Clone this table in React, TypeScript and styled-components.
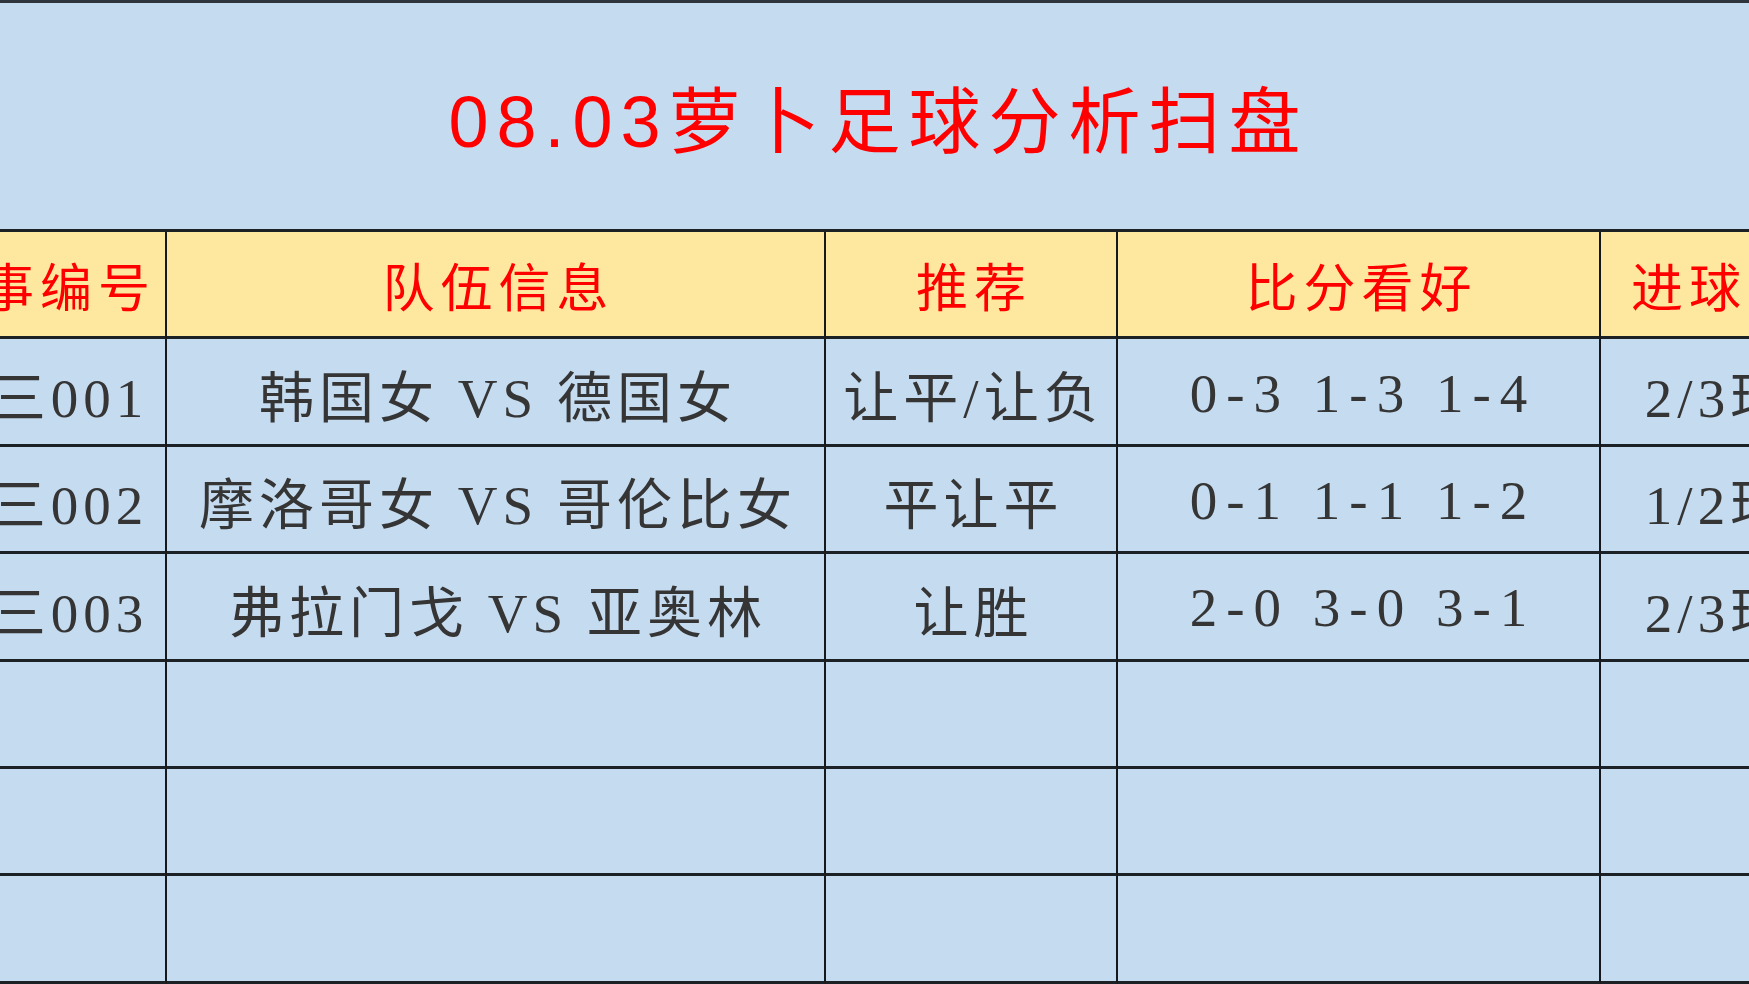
import styled, { createGlobalStyle } from 'styled-components'

// match sheet columns: the first and last are cut by the frame edge
const columns = [258, 659, 292, 483, 230]

const headers = ['赛事编号', '队伍信息', '推荐', '比分看好', '进球数']

interface Match {
    code: string
    teams: string
    tip: string
    scores: string
    goals: string
}

const matches: Match[] = [
    { code: '周三001', teams: '韩国女 VS 德国女', tip: '让平/让负', scores: '0-3 1-3 1-4', goals: '2/3球' },
    { code: '周三002', teams: '摩洛哥女 VS 哥伦比女', tip: '平让平', scores: '0-1 1-1 1-2', goals: '1/2球' },
    { code: '周三003', teams: '弗拉门戈 VS 亚奥林', tip: '让胜', scores: '2-0 3-0 3-1', goals: '2/3球' },
]

const emptyRows = 3

const GlobalStyle = createGlobalStyle`
    * {
        box-sizing: border-box;
    }
    body {
        margin: 0;
        background: #c5dbf0;
        font-family: "Liberation Serif", "Noto Sans CJK SC", serif;
    }
`

const App = () => {
    return (
        <>
            <GlobalStyle />
            <Page>
                <Title>08.03萝卜足球分析扫盘</Title>
                <Viewport>
                    <Grid>
                        {headers.map((h) => (
                            <HeadCell key={h}>{h}</HeadCell>
                        ))}
                        {matches.map((m) => (
                            <Row key={m.code}>
                                <Cell>{m.code}</Cell>
                                <Cell>{m.teams}</Cell>
                                <Cell>{m.tip}</Cell>
                                <Cell $spacing={9}>{m.scores}</Cell>
                                <Cell>{m.goals}</Cell>
                            </Row>
                        ))}
                        {Array.from({ length: emptyRows }).map((_, i) => (
                            <Row key={'empty' + i}>
                                {columns.map((_, j) => (
                                    <Cell key={j} />
                                ))}
                            </Row>
                        ))}
                    </Grid>
                </Viewport>
            </Page>
        </>
    )
}

const Page = styled.div`
    width: 1749px;
    height: 984px;
    overflow: hidden;
    background: #c5dbf0;
    border-top: 3px solid #2e353c;
    display: flex;
    flex-direction: column;
`

const Title = styled.h1`
    margin: 0;
    height: 226px;
    display: flex;
    align-items: center;
    justify-content: center;
    padding-bottom: 2px;
    color: #ff0000;
    font-family: "Liberation Sans", "Noto Sans CJK SC", sans-serif;
    font-weight: 400;
    font-size: 72px;
    letter-spacing: 8px;
    text-indent: 8px;
`

const Viewport = styled.div`
    width: 100%;
    overflow: hidden;
    flex: 1;
`

const Grid = styled.div`
    display: grid;
    grid-template-columns: ${columns.map((c) => c + 'px').join(' ')};
    grid-auto-rows: 107.4px;
    width: max-content;
    margin-left: -91px;
    border-top: 3px solid #1c2126;
`

// rows are just a grouping, cells sit directly in the grid
const Row = styled.div`
    display: contents;
`

const BaseCell = styled.div`
    display: flex;
    align-items: center;
    justify-content: center;
    white-space: nowrap;
    border-right: 2px solid #15191d;
    border-bottom: 3px solid #1c2126;
`

const HeadCell = styled(BaseCell)`
    background: #fee8a0;
    color: #ff0000;
    font-family: "Noto Sans CJK SC", sans-serif;
    font-size: 52px;
    letter-spacing: 6px;
    text-indent: 6px;
`

const Cell = styled(BaseCell)<{ $spacing?: number }>`
    background: #c5dbf0;
    color: #353535;
    font-family: "Liberation Serif", "Noto Sans CJK SC", serif;
    font-size: 55px;
    letter-spacing: ${(p) => p.$spacing ?? 5}px;
    text-indent: ${(p) => p.$spacing ?? 5}px;
    padding-top: 3px;
`

export default App
